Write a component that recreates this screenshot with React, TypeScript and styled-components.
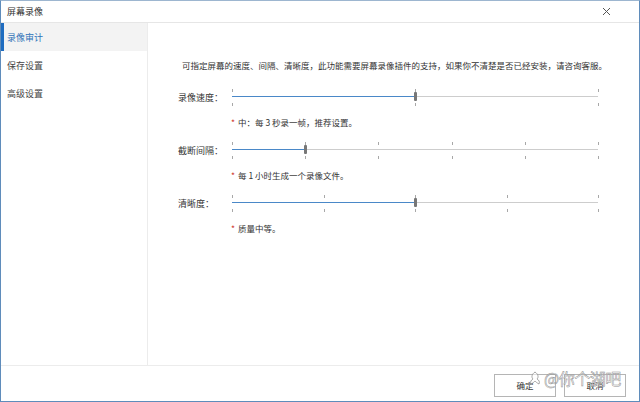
import styled, { createGlobalStyle } from 'styled-components';

const GlobalStyle = createGlobalStyle`
  html, body {
    margin: 0;
    padding: 0;
    background: #fff;
  }
  body {
    font-family: "Noto Sans CJK SC", "Noto Sans", sans-serif;
    color: #333;
  }
`;

const Window = styled.div`
  position: relative;
  width: 640px;
  height: 402px;
  box-sizing: border-box;
  border: 1px solid #5f8cbb;
  border-top-color: #9db6d0;
  display: flex;
  flex-direction: column;
  background: #fff;
  overflow: hidden;
`;

const TitleBar = styled.div`
  height: 21px;
  flex: none;
  display: flex;
  align-items: center;
  justify-content: space-between;
  padding: 0 28px 0 6px;
  border-bottom: 1px solid #e6e6e6;
  font-size: 9px;
  color: #333;
`;

const CloseButton = styled.div`
  width: 9px;
  height: 9px;
  display: flex;
`;

const Body = styled.div`
  flex: 1;
  display: flex;
  min-height: 0;
`;

const Sidebar = styled.div`
  width: 146px;
  flex: none;
  border-right: 1px solid #ececec;
  display: flex;
  flex-direction: column;
`;

const NavItem = styled.div<{ $active?: boolean }>`
  height: 28px;
  display: flex;
  align-items: center;
  padding-left: 3px;
  font-size: 9px;
  color: ${(p) => (p.$active ? '#2f72b8' : '#444')};
  background: ${(p) => (p.$active ? '#f3f3f3' : 'transparent')};
  border-left: 3px solid ${(p) => (p.$active ? '#1f6cc0' : 'transparent')};
`;

const Content = styled.div`
  flex: 1;
  padding: 36px 40px 0 30px;
  display: flex;
  flex-direction: column;
`;

const Description = styled.p`
  margin: 0 0 17px 4px;
  font-size: 8.5px;
  line-height: 12px;
  color: #333;
  white-space: nowrap;
`;

const Field = styled.div`
  display: flex;
  flex-direction: column;
  margin-bottom: 13px;
`;

const FieldRow = styled.div`
  display: grid;
  grid-template-columns: 54px 366px;
  align-items: center;
  height: 18px;
`;

const Label = styled.span`
  font-size: 9px;
  color: #333;
  white-space: nowrap;
  padding-top: 1px;
`;

const SliderBox = styled.div`
  position: relative;
  height: 18px;
`;

const Track = styled.div`
  position: absolute;
  left: 0;
  right: 0;
  top: 8px;
  height: 1px;
  background: #cdcdcd;
`;

const Fill = styled.div`
  position: absolute;
  left: 0;
  top: 8px;
  height: 1px;
  background: #4a88c8;
`;

const Tick = styled.div<{ $bottom?: boolean }>`
  position: absolute;
  width: 1px;
  height: 3px;
  top: ${(p) => (p.$bottom ? '15px' : '1px')};
  background: #a8a8a8;
`;

const Thumb = styled.div`
  position: absolute;
  top: 4px;
  width: 3px;
  height: 9px;
  margin-left: -1px;
  background: #777;
  border-radius: 1px;
`;

const Note = styled.div`
  margin: 10px 0 0 53px;
  font-size: 8.5px;
  line-height: 12px;
  color: #333;
`;

const Star = styled.span`
  color: #d03a2f;
  margin-right: 3px;
`;

const Footer = styled.div`
  height: 35px;
  flex: none;
  border-top: 1px solid #ececec;
  display: flex;
  align-items: center;
  justify-content: flex-end;
  gap: 8px;
  padding-right: 13px;
`;

const Button = styled.button`
  width: 62px;
  height: 23px;
  border: 1px solid #b5b5b5;
  background: #fff;
  font-family: inherit;
  font-size: 8.5px;
  color: #333;
  padding: 0;
  margin-top: 3px;
`;

const Watermark = styled.div`
  position: absolute;
  left: 527px;
  top: 368px;
  display: flex;
  align-items: center;
  gap: 2px;
  font-size: 16px;
  line-height: 18px;
  color: rgba(255, 255, 255, 0.55);
  -webkit-text-stroke: 0.5px #8f8f8f;
  pointer-events: none;
  letter-spacing: -0.5px;
`;

type SliderProps = {
  ticks: number;
  value: number;
};

const Slider = ({ ticks, value }: SliderProps) => {
  const marks = Array.from({ length: ticks }, (_, i) => (i / (ticks - 1)) * 100);
  return (
    <SliderBox>
      {marks.map((m) => (
        <Tick key={'t' + m} style={{ left: m + '%' }} />
      ))}
      {marks.map((m) => (
        <Tick key={'b' + m} $bottom style={{ left: m + '%' }} />
      ))}
      <Track />
      <Fill style={{ width: value + '%' }} />
      <Thumb style={{ left: value + '%' }} />
    </SliderBox>
  );
};

const fields = [
  { label: '录像速度：', ticks: 3, value: 50, note: '中：每 3 秒录一帧，推荐设置。' },
  { label: '截断间隔：', ticks: 6, value: 20, note: '每 1 小时生成一个录像文件。' },
  { label: '清晰度：', ticks: 5, value: 50, note: '质量中等。' },
];

const App = () => {
  return (
    <>
      <GlobalStyle />
      <Window>
        <TitleBar>
          <span>屏幕录像</span>
          <CloseButton>
            <svg width="9" height="9" viewBox="0 0 9 9">
              <path d="M1 1 L8 8 M8 1 L1 8" stroke="#555" strokeWidth="1" />
            </svg>
          </CloseButton>
        </TitleBar>
        <Body>
          <Sidebar>
            <NavItem $active>录像审计</NavItem>
            <NavItem>保存设置</NavItem>
            <NavItem>高级设置</NavItem>
          </Sidebar>
          <Content>
            <Description>
              可指定屏幕的速度、间隔、清晰度，此功能需要屏幕录像插件的支持，如果你不清楚是否已经安装，请咨询客服。
            </Description>
            {fields.map((f) => (
              <Field key={f.label}>
                <FieldRow>
                  <Label>{f.label}</Label>
                  <Slider ticks={f.ticks} value={f.value} />
                </FieldRow>
                <Note>
                  <Star>*</Star>
                  {f.note}
                </Note>
              </Field>
            ))}
          </Content>
        </Body>
        <Footer>
          <Button>确定</Button>
          <Button>取消</Button>
        </Footer>
        <Watermark>
          <svg width="14" height="14" viewBox="0 0 14 14">
            <path
              d="M7 1 C4 3 3 6 5 8 C3 9 2 11 3 13 C5 12 6 11 7 10 C8 11 9 12 11 13 C12 11 11 9 9 8 C11 6 10 3 7 1 Z"
              fill="rgba(255,255,255,0.55)"
              stroke="#8f8f8f"
              strokeWidth="0.8"
            />
          </svg>
          <span>@你个湖吧</span>
        </Watermark>
      </Window>
    </>
  );
};

export default App;
